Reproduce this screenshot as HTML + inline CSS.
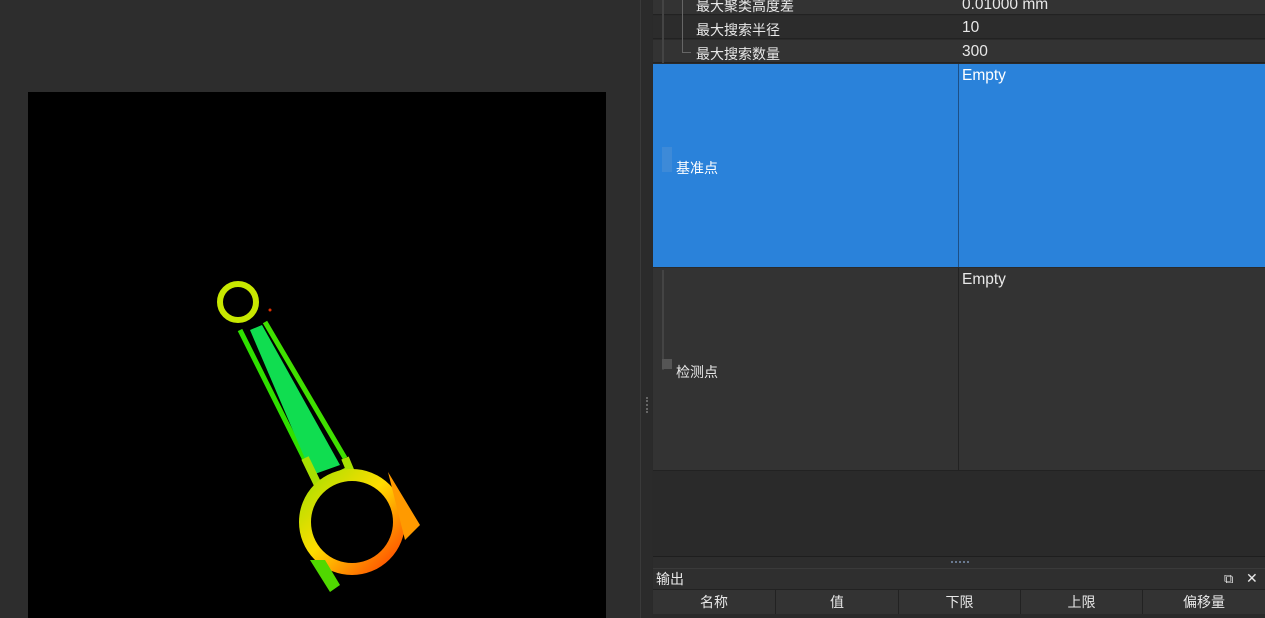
<!DOCTYPE html>
<html><head><meta charset="utf-8"><style>
*{margin:0;padding:0;box-sizing:border-box}
body{width:1265px;height:618px;overflow:hidden;background:#2d2d2d;font-family:"Liberation Sans","Noto Sans CJK SC",sans-serif;font-size:14px;color:#e8e8e8;position:relative}
.a{position:absolute}
.v{font-size:15.5px}
</style></head><body>
<div class="a" style="left:0;top:0;width:640px;height:618px;background:#2d2d2d"></div>
<div class="a" style="left:28px;top:92px;width:578px;height:526px;background:#000">
<svg width="578" height="526" viewBox="28 92 578 526" style="position:absolute;left:0;top:0">
<defs><linearGradient id="g" x1="0" y1="0" x2="1" y2="1"><stop offset="0" stop-color="#a6e000"/><stop offset="0.45" stop-color="#ffdd00"/><stop offset="1" stop-color="#ff4000"/></linearGradient></defs>
<circle cx="238" cy="302" r="18" fill="none" stroke="#c8e800" stroke-width="6"/>
<path d="M240 330 L305 460" stroke="#30e000" stroke-width="5"/>
<path d="M265 322 L345 458" stroke="#40e000" stroke-width="5"/>
<path d="M250 330 L312 475 L340 465 L262 325 Z" fill="#10dd50"/>
<path d="M305 458 L318 485 L350 470 L345 458" stroke="#a8e000" stroke-width="8" fill="none"/>
<circle cx="352" cy="522" r="47" fill="none" stroke="url(#g)" stroke-width="12"/>
<path d="M310 560 L330 592 L340 585 L325 560Z" fill="#50d800"/>
<path d="M388 472 L420 525 L405 540Z" fill="#ff9a00"/>
<circle cx="270" cy="310" r="1.5" fill="#e03000"/>
</svg></div>
<div class="a" style="left:640px;top:0;width:12px;height:618px;background:#2b2b2b;border-left:1px solid #3a3a3a"></div>
<div class="a" style="left:652px;top:0;width:613px;height:618px;background:#2a2a2a"></div>
<div class="a" style="left:653px;top:0;width:612px;height:15px;background:#333;border-bottom:1px solid #222"></div>
<div class="a" style="left:653px;top:16px;width:612px;height:23px;background:#2c2c2c;border-bottom:1px solid #222"></div>
<div class="a" style="left:653px;top:40px;width:612px;height:23px;background:#333;border-bottom:1px solid #222"></div>
<div class="a" style="left:696px;top:-4px">最大聚类高度差</div><div class="a v" style="left:962px;top:-4px">0.01000 mm</div>
<div class="a" style="left:696px;top:20px">最大搜索半径</div><div class="a v" style="left:962px;top:19px">10</div>
<div class="a" style="left:696px;top:44px">最大搜索数量</div><div class="a v" style="left:962px;top:43px">300</div>
<div class="a" style="left:682px;top:0;width:1px;height:52px;background:#666"></div>
<div class="a" style="left:682px;top:52px;width:9px;height:1px;background:#666"></div>
<div class="a" style="left:662px;top:0;width:2px;height:63px;background:#444"></div>
<div class="a" style="left:653px;top:64px;width:612px;height:203px;background:#2a82da"></div>
<div class="a" style="left:958px;top:64px;width:1px;height:203px;background:#1d4f85"></div>
<div class="a" style="left:662px;top:147px;width:10px;height:25px;background:#3d8ad8"></div>
<div class="a" style="left:676px;top:158px;color:#fff">基准点</div>
<div class="a v" style="left:962px;top:67px;color:#fff">Empty</div>
<div class="a" style="left:653px;top:268px;width:612px;height:203px;background:#333;border-bottom:1px solid #222"></div>
<div class="a" style="left:958px;top:268px;width:1px;height:203px;background:#222"></div>
<div class="a" style="left:662px;top:270px;width:2px;height:100px;background:#444"></div>
<div class="a" style="left:662px;top:359px;width:10px;height:10px;background:#555"></div>
<div class="a" style="left:676px;top:362px">检测点</div>
<div class="a v" style="left:962px;top:271px">Empty</div>
<div class="a" style="left:653px;top:556px;width:612px;height:12px;background:#2d2d2d;border-top:1px solid #1e1e1e"></div>
<div class="a" style="left:951px;top:561px;width:18px;height:2px;border-top:2px dotted #6a7a90"></div>
<div class="a" style="left:653px;top:568px;width:612px;height:21px;background:#2f2f2f;border-top:1px solid #3a3a3a"></div>
<div class="a" style="left:656px;top:569px">输出</div>
<div class="a" style="left:1224px;top:571px;font-size:13px">⧉</div>
<div class="a" style="left:1246px;top:570px;font-size:14px">✕</div>
<div class="a" style="left:653px;top:589px;width:612px;height:26px;background:#333;border-top:1px solid #222;display:flex">
<div style="width:123px;text-align:center;border-right:1px solid #222;line-height:24px">名称</div>
<div style="width:123px;text-align:center;border-right:1px solid #222;line-height:24px">值</div>
<div style="width:122px;text-align:center;border-right:1px solid #222;line-height:24px">下限</div>
<div style="width:122px;text-align:center;border-right:1px solid #222;line-height:24px">上限</div>
<div style="flex:1;text-align:center;line-height:24px">偏移量</div>
</div>
<div class="a" style="left:653px;top:614px;width:612px;height:4px;background:#2a2a2a"></div>
<div class="a" style="left:646px;top:397px;width:2px;height:16px;border-left:2px dotted #666"></div>
</body></html>
